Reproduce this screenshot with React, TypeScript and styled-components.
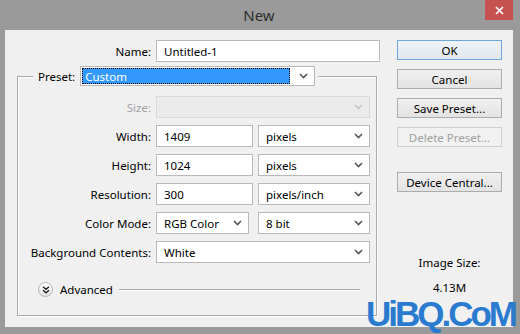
import React from "react";
import styled, { createGlobalStyle } from "styled-components";

const GlobalStyle = createGlobalStyle`
  html, body {
    margin: 0;
    padding: 0;
  }
  body {
    width: 520px;
    height: 334px;
    overflow: hidden;
    font-family: "Noto Sans", "DejaVu Sans", sans-serif;
    font-size: 11.5px;
    color: #000;
  }
`;

const Window = styled.div`
  position: relative;
  width: 520px;
  height: 334px;
  box-sizing: border-box;
  padding: 0 7px 7px 5px;
  background: #9a9a9a;
  display: flex;
  flex-direction: column;
  overflow: hidden;
`;

const TitleBar = styled.div`
  height: 30px;
  flex-shrink: 0;
  display: grid;
  grid-template-columns: 1fr auto 1fr;
`;

const Title = styled.div`
  grid-column: 2;
  align-self: center;
  font-size: 15px;
  color: #2d2d2d;
`;

const CloseButton = styled.div`
  grid-column: 3;
  justify-self: end;
  align-self: start;
  width: 28px;
  height: 20px;
  background: #c75050;
  display: flex;
  align-items: center;
  justify-content: center;
`;

const Client = styled.div`
  flex: 1;
  background: #f0f0f0;
  display: flex;
  padding: 10px 11px 0 0;
`;

const LeftPane = styled.div`
  width: 380px;
  display: flex;
  flex-direction: column;
`;

const NameRow = styled.div`
  display: grid;
  grid-template-columns: 146px 224px;
  column-gap: 5px;
  height: 22px;
  align-items: center;
`;

const Label = styled.div<{ $disabled?: boolean }>`
  text-align: right;
  white-space: nowrap;
  color: ${(p) => (p.$disabled ? "#a3a3a3" : "#000")};
`;

const TextInput = styled.input<{ $width?: number }>`
  box-sizing: border-box;
  width: ${(p) => (p.$width ? `${p.$width}px` : "100%")};
  height: 22px;
  margin: 0;
  padding: 0 0 0 7px;
  border: 1px solid #b9b9b9;
  background: #fff;
  font-family: inherit;
  font-size: 11.5px;
  color: #000;
  outline: none;
`;

const GroupBox = styled.fieldset`
  box-sizing: border-box;
  width: 360px;
  margin: 4px 0 0 12px;
  padding: 0;
  border: 1px solid #a9a9a9;
  box-shadow: inset 1px 1px 0 #fff, 1px 1px 0 #fff;
  min-inline-size: 0;
`;

const Legend = styled.legend`
  margin-left: 15px;
  padding: 0 3px 0 5px;
  background: #f0f0f0;
  display: flex;
  align-items: center;
  gap: 5px;
`;

const FieldGrid = styled.div`
  display: grid;
  grid-template-columns: 133px 214px;
  grid-auto-rows: 22px;
  column-gap: 5px;
  row-gap: 7px;
  align-items: center;
  margin-top: 10px;
`;

const FieldPair = styled.div`
  display: flex;
  justify-content: space-between;
  align-items: center;
`;

const SelectBox = styled.div<{ $width?: number; $height?: number; $disabled?: boolean }>`
  box-sizing: border-box;
  width: ${(p) => (p.$width ? `${p.$width}px` : "100%")};
  height: ${(p) => p.$height ?? 22}px;
  border: 1px solid ${(p) => (p.$disabled ? "#dadada" : "#b9b9b9")};
  background: ${(p) => (p.$disabled ? "#ebebeb" : "#fff")};
  display: flex;
  align-items: center;
  padding: 0 6px 0 7px;
  color: #000;
  white-space: nowrap;
`;

const SelectText = styled.span`
  flex: 1;
`;

const Highlight = styled.div`
  flex: 1;
  align-self: stretch;
  margin: 1px 9px 1px -6px;
  background: #3399ff;
  outline: 1px dotted #000;
  outline-offset: -1px;
  color: #fff;
  display: flex;
  align-items: center;
  padding-left: 3px;
`;

const AdvancedRow = styled.div`
  display: flex;
  align-items: center;
  height: 15px;
  margin: 19px 16px 18px 20px;
`;

const Expander = styled.div`
  box-sizing: border-box;
  width: 15px;
  height: 15px;
  border-radius: 50%;
  border: 1px solid #b3b3b3;
  background: linear-gradient(#ffffff, #e4e4e4);
  display: flex;
  align-items: center;
  justify-content: center;
`;

const AdvancedText = styled.span`
  margin-left: 7px;
`;

const EtchedLine = styled.div`
  flex: 1;
  height: 1px;
  margin-left: 6px;
  background: #a9a9a9;
  box-shadow: 0 1px 0 #fff;
`;

const RightPane = styled.div`
  width: 105px;
  margin-left: auto;
  display: flex;
  flex-direction: column;
`;

const Button = styled.div<{ $primary?: boolean; $disabled?: boolean; $gapBefore?: number }>`
  box-sizing: border-box;
  height: 20px;
  margin-top: ${(p) => p.$gapBefore ?? 0}px;
  margin-bottom: 9px;
  border: 1px solid
    ${(p) => (p.$primary ? "#6ea6dd" : p.$disabled ? "#cfcfcf" : "#acacac")};
  background: ${(p) =>
    p.$disabled
      ? "#f1f1f1"
      : p.$primary
      ? "linear-gradient(#eef3f8, #e1e8ef)"
      : "linear-gradient(#f0f0f0, #e3e3e3)"};
  color: ${(p) => (p.$disabled ? "#a0a0a0" : "#000")};
  display: flex;
  align-items: center;
  justify-content: center;
`;

const ImageSize = styled.div`
  margin-top: 54px;
  text-align: center;
  line-height: 16px;
`;

const ImageSizeValue = styled.div`
  margin-top: 9px;
`;

const Watermark = styled.div`
  position: absolute;
  right: 2px;
  bottom: 0;
  padding: 0 3px 0 0;
  font-family: "Liberation Sans", Arial, sans-serif;
  font-weight: bold;
  font-size: 35px;
  line-height: 40px;
  letter-spacing: -3px;
  white-space: nowrap;
  color: #2a7bd0;
  pointer-events: none;
`;

const Chevron = ({ disabled }: { disabled?: boolean }) => (
  <svg width="9" height="6" viewBox="0 0 9 6">
    <path
      d="M1 1 L4.5 4.5 L8 1"
      fill="none"
      stroke={disabled ? "#c4c4c4" : "#555"}
      strokeWidth="1.6"
    />
  </svg>
);

const Select = ({
  value,
  width,
  disabled,
}: {
  value?: string;
  width?: number;
  disabled?: boolean;
}) => (
  <SelectBox $width={width} $disabled={disabled}>
    <SelectText>{value}</SelectText>
    <Chevron disabled={disabled} />
  </SelectBox>
);

const rows = [
  { label: "Width:", value: "1409", unit: "pixels" },
  { label: "Height:", value: "1024", unit: "pixels" },
  { label: "Resolution:", value: "300", unit: "pixels/inch" },
];

export default function App() {
  return (
    <>
      <GlobalStyle />
      <Window>
        <TitleBar>
          <Title>New</Title>
          <CloseButton>
            <svg width="9" height="9" viewBox="0 0 9 9">
              <path d="M1 1 L8 8 M8 1 L1 8" stroke="#fff" strokeWidth="1.7" />
            </svg>
          </CloseButton>
        </TitleBar>
        <Client>
          <LeftPane>
            <NameRow>
              <Label>Name:</Label>
              <TextInput readOnly value="Untitled-1" />
            </NameRow>
            <GroupBox>
              <Legend>
                <Label>Preset:</Label>
                <SelectBox $width={235} $height={20}>
                  <Highlight>Custom</Highlight>
                  <Chevron />
                </SelectBox>
              </Legend>
              <FieldGrid>
                <Label $disabled>Size:</Label>
                <Select disabled />
                {rows.map((r) => (
                  <React.Fragment key={r.label}>
                    <Label>{r.label}</Label>
                    <FieldPair>
                      <TextInput readOnly value={r.value} $width={97} />
                      <Select value={r.unit} width={112} />
                    </FieldPair>
                  </React.Fragment>
                ))}
                <Label>Color Mode:</Label>
                <FieldPair>
                  <Select value="RGB Color" width={93} />
                  <Select value="8 bit" width={112} />
                </FieldPair>
                <Label>Background Contents:</Label>
                <Select value="White" />
              </FieldGrid>
              <AdvancedRow>
                <Expander>
                  <svg width="8" height="8" viewBox="0 0 8 8">
                    <path
                      d="M1 0.8 L4 3.3 L7 0.8 M1 4.3 L4 6.8 L7 4.3"
                      fill="none"
                      stroke="#222"
                      strokeWidth="1.4"
                    />
                  </svg>
                </Expander>
                <AdvancedText>Advanced</AdvancedText>
                <EtchedLine />
              </AdvancedRow>
            </GroupBox>
          </LeftPane>
          <RightPane>
            <Button $primary>OK</Button>
            <Button>Cancel</Button>
            <Button>Save Preset...</Button>
            <Button $disabled>Delete Preset...</Button>
            <Button $gapBefore={16}>Device Central...</Button>
            <ImageSize>
              <div>Image Size:</div>
              <ImageSizeValue>4.13M</ImageSizeValue>
            </ImageSize>
          </RightPane>
        </Client>
        <Watermark>UiBQ.CoM</Watermark>
      </Window>
    </>
  );
}
